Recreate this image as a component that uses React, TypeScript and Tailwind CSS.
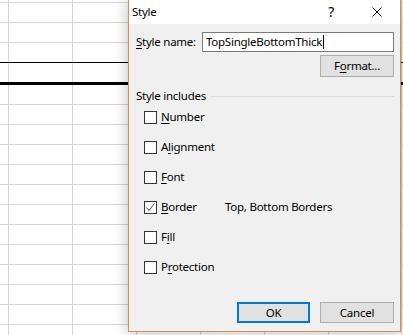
import React from "react";

const font = { fontFamily: '"Noto Sans", "Open Sans", sans-serif' };

// row heights and top-border styles of the sheet behind the dialog
const rows: { h: string; line: string }[] = [
  { h: "h-[20px]", line: "border-t border-[#d4d4d4]" },
  { h: "h-[20px]", line: "border-t border-[#d4d4d4]" },
  { h: "h-[20px]", line: "border-t border-[#d4d4d4]" },
  { h: "h-[20px]", line: "border-t border-black" },
  { h: "h-[22px]", line: "border-t-[3px] border-black" },
  { h: "h-[20px]", line: "border-t border-[#d4d4d4]" },
  { h: "h-[20px]", line: "border-t border-[#d4d4d4]" },
  { h: "h-[20px]", line: "border-t border-[#d4d4d4]" },
  { h: "h-[20px]", line: "border-t border-[#d4d4d4]" },
  { h: "h-[20px]", line: "border-t border-[#d4d4d4]" },
  { h: "h-[20px]", line: "border-t border-[#d4d4d4]" },
  { h: "h-[20px]", line: "border-t border-[#d4d4d4]" },
  { h: "h-[20px]", line: "border-t border-[#d4d4d4]" },
  { h: "h-[20px]", line: "border-t border-[#d4d4d4]" },
  { h: "h-[20px]", line: "border-t border-[#d4d4d4]" },
  { h: "h-[20px]", line: "border-t border-[#d4d4d4]" },
  { h: "h-[20px]", line: "border-t border-[#d4d4d4]" },
];

function Cells() {
  return (
    <>
      <div className="w-[9px] shrink-0 border-r border-[#d4d4d4]" />
      <div className="w-[64px] shrink-0 border-r border-[#d4d4d4]" />
      <div className="w-[64px] shrink-0 border-r border-[#d4d4d4]" />
      <div className="w-[64px] shrink-0 border-r border-[#d4d4d4]" />
      <div className="w-[64px] shrink-0 border-r border-[#d4d4d4]" />
      <div className="w-[64px] shrink-0 border-r border-[#d4d4d4]" />
      <div className="w-[73px] shrink-0 border-r border-[#d4d4d4]" />
    </>
  );
}

function Sheet() {
  return (
    <div className="flex flex-col">
      <div className="flex h-[2px]">
        <Cells />
      </div>
      {rows.map((r, i) => (
        <div key={i} className={`flex ${r.h} ${r.line}`}>
          <Cells />
        </div>
      ))}
    </div>
  );
}

function Box({ checked }: { checked?: boolean }) {
  return (
    <div className="flex h-[13px] w-[13px] shrink-0 items-center justify-center border border-[#333333] bg-white">
      {checked && (
        <svg width="11" height="11" viewBox="0 0 11 11">
          <polyline points="1.5,5.5 4,8.5 9.5,1.5" fill="none" stroke="#4d4d4d" strokeWidth="1" />
        </svg>
      )}
    </div>
  );
}

function Option({
  pre,
  key_,
  post,
  checked,
  note,
}: {
  pre: string;
  key_: string;
  post: string;
  checked?: boolean;
  note?: string;
}) {
  return (
    <div className="flex h-[30px] items-center pl-[8px]">
      <Box checked={checked} />
      <span className="ml-[4px] w-[64px]">
        {pre}
        <u className="underline-offset-2">{key_}</u>
        {post}
      </span>
      {note && <span>{note}</span>}
    </div>
  );
}

export default function App() {
  return (
    <div
      className="relative h-[335px] w-[403px] overflow-hidden bg-white text-[11.5px] leading-[16px] tracking-[-0.25px] text-black"
      style={font}
    >
      <Sheet />

      <div className="absolute left-[128px] top-0 flex h-[332px] w-[273px] flex-col border-x border-b border-[#dc8c4c] bg-[#f0f0f0] shadow-[0_0_14px_rgba(0,0,0,0.28)]">
        {/* title bar */}
        <div className="flex h-[24px] items-center bg-white pl-[3px]">
          <span>Style</span>
          <span className="ml-auto mr-[38px] text-[14px]">?</span>
          <svg width="10" height="10" viewBox="0 0 10 10" className="mr-[18px]">
            <path d="M0.5 0.5 L9.5 9.5 M9.5 0.5 L0.5 9.5" stroke="#000" strokeWidth="1" />
          </svg>
        </div>

        <div className="flex flex-col pl-[7px] pr-[6px]">
          <div className="mt-[8px] flex h-[20px] items-center">
            <span className="w-[66px]">
              <u className="underline-offset-2">S</u>tyle name:
            </span>
            <div className="flex h-[20px] flex-1 items-center border border-[#7a7a7a] bg-white pl-[3px]">
              <span>TopSingleBottomThick</span>
              <span className="ml-[1px] h-[14px] w-px bg-black" />
            </div>
          </div>

          <button className="mt-[3px] flex h-[22px] w-[74px] items-center justify-center self-end border border-[#adadad] bg-[#e1e1e1]">
            <span>
              F<u className="underline-offset-2">o</u>rmat...
            </span>
          </button>

          <div className="mt-[13px] flex h-[12px] items-center">
            <span>Style includes</span>
            <div className="ml-[5px] flex-1 border-t border-[#dcdcdc]" />
          </div>

          <Option pre="" key_="N" post="umber" />
          <Option pre="A" key_="l" post="ignment" />
          <Option pre="" key_="F" post="ont" />
          <Option pre="" key_="B" post="order" checked note="Top, Bottom Borders" />
          <Option pre="F" key_="i" post="ll" />
          <Option pre="P" key_="r" post="otection" />

          <div className="mt-[20px] flex justify-end gap-[10px]">
            <button className="flex h-[21px] w-[73px] items-center justify-center border-2 border-[#0078d7] bg-[#e1e1e1]">
              OK
            </button>
            <button className="flex h-[21px] w-[74px] items-center justify-center border border-[#adadad] bg-[#e1e1e1]">
              Cancel
            </button>
          </div>
        </div>
      </div>
    </div>
  );
}
